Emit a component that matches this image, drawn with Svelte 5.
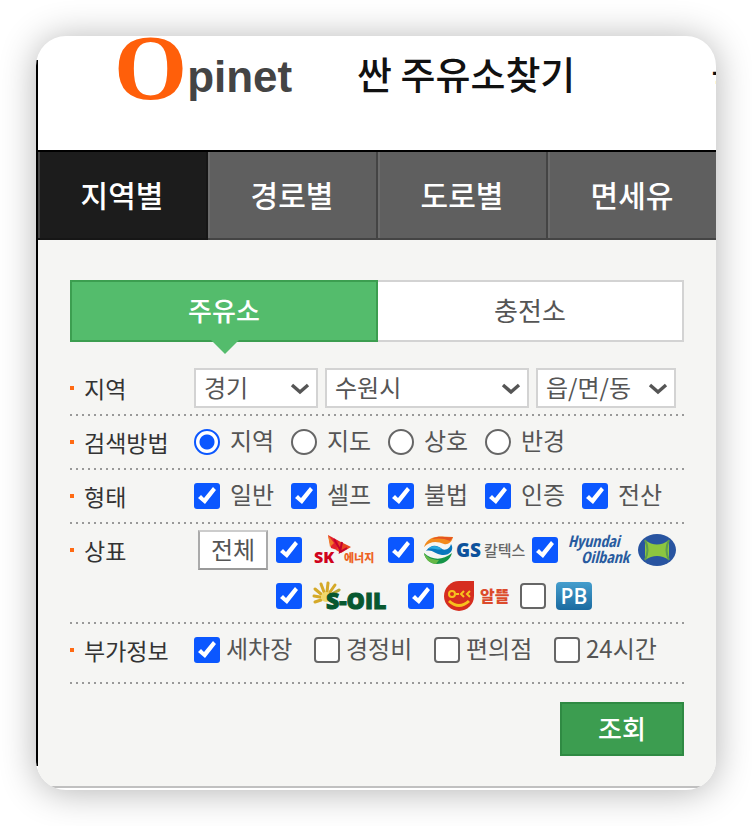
<script>
  const tabs = ['지역별', '경로별', '도로별', '면세유']
  const methods = ['지역', '지도', '상호', '반경']

  let activeTab = $state('지역별')
  let station = $state('주유소')
  let method = $state('지역')

  let types = $state([
    { name: '일반', checked: true },
    { name: '셀프', checked: true },
    { name: '불법', checked: true },
    { name: '인증', checked: true },
    { name: '전산', checked: true },
  ])

  let brands = $state({
    sk: true,
    gs: true,
    hyundai: true,
    soil: true,
    altteul: true,
    pb: false,
  })

  let extras = $state([
    { name: '세차장', checked: true },
    { name: '경정비', checked: false },
    { name: '편의점', checked: false },
    { name: '24시간', checked: false },
  ])

  function selectAll() {
    for (const key in brands) brands[key] = true
  }
</script>

{#snippet chevron()}
  <svg class="chevron" viewBox="0 0 20 14" aria-hidden="true">
    <path d="M2 3 L10 10 L18 3" fill="none" stroke="#555" stroke-width="3.4" />
  </svg>
{/snippet}

<main class="card">
  <header>
    <a class="logo" href="#home"><span class="logo-o">O</span><span>pinet</span></a>
    <a class="menu" href="#search">싼 주유소찾기</a>
    <a class="menu next" href="#price">국</a>
  </header>

  <nav class="tabs">
    {#each tabs as tab}
      <button
        type="button"
        class:active={tab === activeTab}
        onclick={() => (activeTab = tab)}>{tab}</button
      >
    {/each}
  </nav>

  <form onsubmit={(e) => e.preventDefault()}>
    <div class="toggle">
      {#each ['주유소', '충전소'] as kind}
        <button
          type="button"
          class:active={kind === station}
          onclick={() => (station = kind)}>{kind}</button
        >
      {/each}
    </div>

    <div class="row">
      <span class="title">지역</span>
      <div class="regions">
        <div class="select">
          <select aria-label="시/도"><option>경기</option></select>
          {@render chevron()}
        </div>
        <div class="select">
          <select aria-label="시/군/구"><option>수원시</option></select>
          {@render chevron()}
        </div>
        <div class="select">
          <select aria-label="읍/면/동"><option>읍/면/동</option></select>
          {@render chevron()}
        </div>
      </div>
    </div>

    <div class="row">
      <span class="title">검색방법</span>
      <div class="options five">
        {#each methods as name}
          <label><input type="radio" value={name} bind:group={method} /><span>{name}</span></label>
        {/each}
      </div>
    </div>

    <div class="row">
      <span class="title">형태</span>
      <div class="options five">
        {#each types as item}
          <label><input type="checkbox" bind:checked={item.checked} /><span>{item.name}</span></label>
        {/each}
      </div>
    </div>

    <div class="row">
      <span class="title">상표</span>
      <div class="brands">
        <button type="button" class="all" onclick={selectAll}>전체</button>
        <div class="line">
          <label class="sk">
            <input type="checkbox" aria-label="SK에너지" bind:checked={brands.sk} />
            <svg width="62" height="32" viewBox="0 0 62 32" aria-hidden="true">
              <path d="M14 1 L25 7 L26 17 L17 14 Z" fill="#e3222c" />
              <path d="M14 1 L20 9 L16 13 Z" fill="#f07a2a" />
              <path d="M25 7 L37 13 L27 19 L22 16 Z" fill="#e8451f" />
              <path d="M20 5 L27 17 M28 8 L26 18 L33 14" fill="none" stroke="#c4002f" stroke-width="2" />
              <text x="0" y="29" font-family="Open Sans" font-weight="800" font-size="16" fill="#d0021b">SK</text>
              <text x="30" y="28" font-family="Noto Sans CJK KR" font-weight="900" font-size="11" fill="#ee6323">에너지</text>
            </svg>
          </label>
          <label class="gs">
            <input type="checkbox" aria-label="GS칼텍스" bind:checked={brands.gs} />
            <svg width="102" height="32" viewBox="0 0 102 32" aria-hidden="true">
              <path d="M0 13 C4 1 15 2 29 3 C28 8 24 11 20 10 C13 7 6 7 0 13 Z" fill="#f28a1d" />
              <path d="M8 5 C15 1 20 4 29 3 L26 7 C20 4 14 4 8 5 Z" fill="#e55320" />
              <path d="M2 17 C8 9 14 12 18 15 C22 17 26 14 27 10 C31 16 25 22 18 21 C11 20 8 15 2 17 Z" fill="#0877bd" />
              <path d="M4 15 C9 10 14 12 18 15 C14 17 9 13 4 15 Z" fill="#29a9df" />
              <path d="M0 19 C8 26 18 27 28 19 C26 27 19 30 13 30 C6 30 1 25 0 19 Z" fill="#159447" />
              <path d="M0 19 C4 24 9 26 15 26 L12 30 C5 29 1 25 0 19 Z" fill="#65b847" />
              <text x="32" y="23" font-family="Open Sans" font-weight="800" font-size="19" fill="#0c529c">GS</text>
              <text x="60" y="22" font-family="Noto Sans CJK KR" font-weight="500" font-size="15" fill="#666">칼텍스</text>
            </svg>
          </label>
          <label class="hd">
            <input type="checkbox" aria-label="현대오일뱅크" bind:checked={brands.hyundai} />
            <svg width="110" height="34" viewBox="0 0 110 34" aria-hidden="true">
              <g font-family="Open Sans Condensed, Open Sans" font-style="italic" font-weight="700" font-size="16" fill="#285b9f">
                <text x="0" y="14">Hyundai</text>
                <text x="13" y="30">Oilbank</text>
              </g>
              <ellipse cx="89" cy="17" rx="19" ry="16" fill="#2854a0" />
              <path d="M77 7 Q89 16 101 7 L101 27 Q89 19 77 27 Z" fill="#8cc63f" />
              <path d="M77 7 Q82 17 77 27 M101 7 Q96 17 101 27" fill="none" stroke="#5d9b50" stroke-width="2" />
            </svg>
          </label>
        </div>
        <div class="line second">
          <label class="soil">
            <input type="checkbox" aria-label="S-OIL" bind:checked={brands.soil} />
            <svg width="82" height="32" viewBox="0 0 82 32" aria-hidden="true">
              <g stroke="#d5a928" stroke-width="3" stroke-linecap="round">
                <path d="M9 20 L3 22" />
                <path d="M8 17 L2 16" />
                <path d="M9 14 L3 9" />
                <path d="M12 12 L9 4" />
                <path d="M15 12 L16 3" />
                <path d="M18 12 L23 5" />
                <path d="M20 14 L27 10" stroke="#b6a83a" />
              </g>
              <circle cx="14" cy="17" r="5" fill="#f1d86b" />
              <text x="14" y="29" font-family="Open Sans" font-weight="800" font-size="23" fill="#07582f" stroke="#07582f">S-OIL</text>
            </svg>
          </label>
          <label class="altteul">
            <input type="checkbox" aria-label="알뜰" bind:checked={brands.altteul} />
            <svg width="68" height="32" viewBox="0 0 68 32" aria-hidden="true">
              <path d="M15 1 H30 V16 A15 15 0 1 1 15 1 Z" fill="#d62d1f" />
              <g fill="none" stroke="#f7c21d" stroke-width="2">
                <circle cx="8" cy="14" r="3" />
                <path d="M12 14 H15 M20 11 L17 14 L20 17 M26 11 L23 14 L26 17" />
                <path d="M5 21 Q15 30 25 21" stroke-width="3" />
              </g>
              <text x="36" y="22" font-family="Noto Sans CJK KR" font-weight="900" font-size="16" fill="#dc4b2c">알뜰</text>
            </svg>
          </label>
          <label class="pb">
            <input type="checkbox" aria-label="PB" bind:checked={brands.pb} />
            <svg width="36" height="28" viewBox="0 0 36 28" aria-hidden="true">
              <defs>
                <linearGradient id="pb-fill" x1="0" y1="0" x2="0" y2="1">
                  <stop offset="0" stop-color="#459ecd" />
                  <stop offset="1" stop-color="#1b6ba0" />
                </linearGradient>
              </defs>
              <rect width="36" height="28" rx="4" fill="url(#pb-fill)" />
              <text x="18" y="22" text-anchor="middle" font-family="Open Sans" font-weight="600" font-size="21" fill="#fff">PB</text>
            </svg>
          </label>
        </div>
      </div>
    </div>

    <div class="row last">
      <span class="title">부가정보</span>
      <div class="options extras">
        {#each extras as item}
          <label><input type="checkbox" bind:checked={item.checked} /><span>{item.name}</span></label>
        {/each}
      </div>
    </div>

    <div class="actions">
      <button type="submit">조회</button>
    </div>
  </form>
</main>

<style>
  :global(body) {
    margin: 0;
    background: #fff;
  }

  .card,
  button,
  select {
    font-family: 'Noto Sans CJK KR', 'Noto Sans', sans-serif;
  }

  .card {
    position: relative;
    box-sizing: border-box;
    margin: 36px;
    padding: 0 0 2px 2px;
    overflow: hidden;
    background: #fff;
    border-radius: 30px;
    box-shadow: 0 2px 36px rgba(0, 0, 0, 0.3);
  }

  .card::before {
    content: '';
    position: absolute;
    top: 24px;
    bottom: 24px;
    left: 0;
    width: 2px;
    background: #000;
  }

  button {
    margin: 0;
    padding: 0;
    cursor: pointer;
  }

  /* Header */
  header {
    display: flex;
    align-items: flex-start;
    height: 114px;
    padding-left: 76px;
    white-space: nowrap;
  }

  header a {
    text-decoration: none;
    flex-shrink: 0;
  }

  .logo {
    display: flex;
    align-items: flex-start;
    width: 243px;
    font: bold 44px/82px 'Liberation Sans', sans-serif;
    color: #444;
  }

  .logo-o {
    font: bold 94px/62px 'Liberation Serif', serif;
    color: #ff5f0a;
  }

  .menu {
    font-size: 38px;
    font-weight: 500;
    line-height: 74px;
    color: #111;
  }

  .next {
    margin-left: 136px;
  }

  /* Tabs */
  .tabs {
    display: flex;
    margin-right: -2px;
    border-top: 2px solid #000;
  }

  .tabs button {
    flex: 1;
    height: 88px;
    padding-bottom: 2px;
    border: solid #444;
    border-width: 0 2px 2px 0;
    box-shadow: inset 2px 0 #6b6b6b;
    background: #5f5f5f;
    color: #fff;
    font-size: 30px;
    font-weight: 500;
  }

  .tabs button.active {
    background: #1c1c1c;
    border-color: #161616;
    box-shadow: inset 2px 0 #444;
  }

  /* Form */
  form {
    padding: 40px 32px 30px;
    background: #f5f5f3;
    border-bottom: 2px solid #c0c0c0;
    color: #555;
    font-size: 24px;
    line-height: 32px;
  }

  .toggle {
    display: flex;
    margin-bottom: 20px;
  }

  .toggle button {
    position: relative;
    flex: 1;
    height: 62px;
    padding-bottom: 4px;
    border: 2px solid #d3d3d3;
    background: #fff;
    color: #555;
    font-size: 26px;
  }

  .toggle button.active {
    border-color: #3c9e50;
    background: #54bc6c;
    color: #fff;
    font-weight: 500;
  }

  .toggle button + button {
    border-left: 0;
  }

  .toggle .active::after {
    content: '';
    position: absolute;
    top: 58px;
    left: 50%;
    margin-left: -13px;
    border: 14px solid transparent;
    border-bottom: 0;
    border-top-color: #54bc6c;
  }

  .row {
    display: flex;
    padding: 6px 0 8px;
    background: repeating-linear-gradient(90deg, #999 0 2px, transparent 2px 6px)
      bottom / 100% 2px no-repeat;
  }

  .last {
    padding-bottom: 14px;
  }

  .title {
    display: flex;
    align-items: center;
    flex: 0 0 124px;
    height: 40px;
    color: #333;
    font-size: 23px;
  }

  .title::before {
    content: '';
    width: 4px;
    height: 4px;
    margin-right: 10px;
    background: #ff6a13;
  }

  .regions {
    display: grid;
    grid-template-columns: 124fr 204fr 140fr;
    gap: 7px;
    flex: 1;
    margin-right: 8px;
  }

  .select {
    position: relative;
  }

  select {
    appearance: none;
    display: block;
    box-sizing: border-box;
    width: 100%;
    height: 40px;
    padding: 0 8px 2px;
    border: 2px solid #d3d3d3;
    border-radius: 0;
    background: #fff;
    color: #555;
    font-size: 24px;
    line-height: 34px;
  }

  .chevron {
    position: absolute;
    top: 14px;
    right: 8px;
    width: 20px;
    height: 14px;
    pointer-events: none;
  }

  .options {
    display: grid;
    flex: 1;
    align-items: center;
  }

  .five {
    grid-template-columns: repeat(5, 97fr);
    margin-right: 5px;
  }

  .extras {
    grid-template-columns: repeat(4, 120fr);
    margin-right: 10px;
  }

  label {
    display: flex;
    align-items: center;
    gap: 10px;
    white-space: nowrap;
  }

  label span {
    padding-bottom: 4px;
  }

  .extras label {
    gap: 6px;
  }

  input {
    appearance: none;
    box-sizing: border-box;
    flex: none;
    width: 26px;
    height: 26px;
    margin: 0;
    border: 2px solid #666;
    border-radius: 4px;
    background: #fff;
  }

  input[type='radio'] {
    border-radius: 50%;
  }

  input[type='radio']:checked {
    border-color: #0b57ff;
    background: radial-gradient(circle, #0b57ff 7px, #fff 8px);
  }

  input[type='checkbox']:checked {
    border: 0;
    border-radius: 3px;
    background: #0b57ff;
  }

  input[type='checkbox']:checked::before {
    content: '';
    display: block;
    width: 26px;
    height: 26px;
    background: #fff;
    clip-path: polygon(4px 15px, 7px 12px, 10px 15px, 19px 4px, 22px 7px, 11px 21px);
  }

  /* Brands */
  .brands {
    display: grid;
    grid-template-columns: 70px 1fr;
    gap: 6px 8px;
    flex: 1;
    padding-left: 4px;
  }

  .all {
    height: 40px;
    padding-bottom: 2px;
    border: 2px solid #aaa;
    border-top-color: #ccc;
    border-bottom-color: #999;
    background: #fff;
    color: #555;
    font-size: 24px;
    line-height: 32px;
  }

  .line {
    display: flex;
    align-items: center;
    height: 40px;
  }

  .second {
    grid-column: 2;
  }

  .brands svg {
    overflow: visible;
  }

  .sk {
    gap: 12px;
    width: 112px;
  }

  .gs {
    width: 144px;
  }

  .soil {
    width: 132px;
  }

  .altteul {
    width: 112px;
  }

  .actions {
    display: flex;
    justify-content: flex-end;
    margin-top: 18px;
  }

  .actions button {
    width: 124px;
    height: 54px;
    padding-bottom: 4px;
    border: 2px solid #2f8a43;
    background: #3c9d50;
    color: #fff;
    font-size: 26px;
    font-weight: 500;
  }
</style>
